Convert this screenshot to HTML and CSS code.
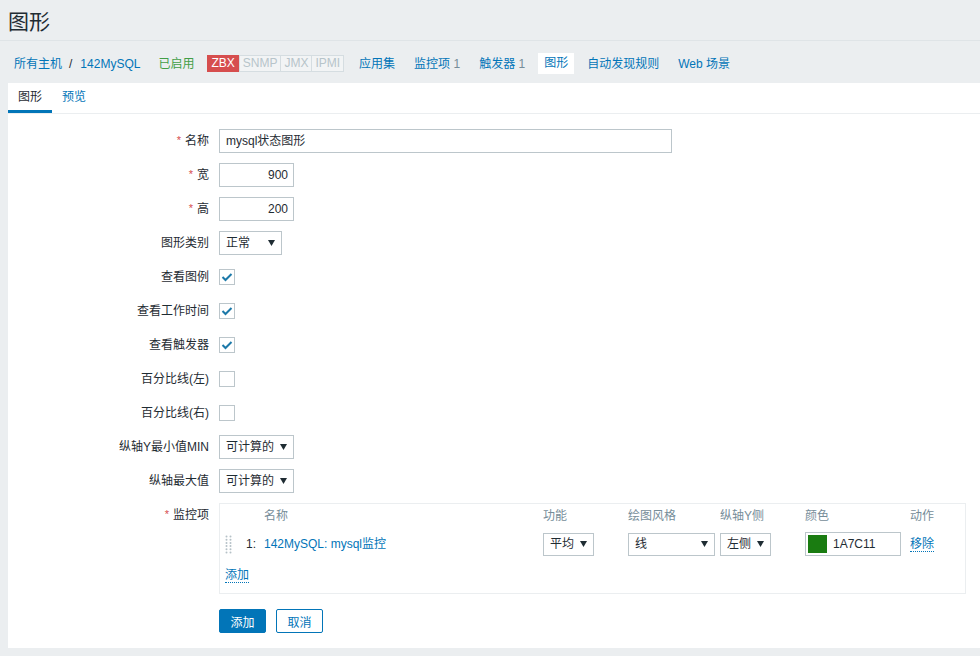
FILE: index.html
```html
<!DOCTYPE html>
<html lang="zh-CN">
<head>
<meta charset="utf-8">
<title>图形</title>
<link rel="stylesheet" href="styles.css">
</head>
<body>
<header class="page-header"><h1>图形</h1></header>
<nav class="host-nav">
  <a class="crumb">所有主机</a><span class="sep">/</span><a class="crumb host">142MySQL</a>
  <span class="status-green">已启用</span>
  <span class="tags"><span class="tag tag-red">ZBX</span><span class="tag">SNMP</span><span class="tag">JMX</span><span class="tag">IPMI</span></span>
  <a class="nav-item">应用集</a>
  <a class="nav-item">监控项 <span class="cnt">1</span></a>
  <a class="nav-item">触发器 <span class="cnt">1</span></a>
  <a class="nav-item selected">图形</a>
  <a class="nav-item">自动发现规则</a>
  <a class="nav-item">Web 场景</a>
</nav>
<main class="panel">
  <div class="tabs"><span class="tab active">图形</span><span class="tab">预览</span></div>
  <form class="form">
    <div class="row"><label class="lbl"><span class="req">*</span>名称</label><div class="field"><span class="input input-name">mysql状态图形</span></div></div>
    <div class="row"><label class="lbl"><span class="req">*</span>宽</label><div class="field"><span class="input input-num">900</span></div></div>
    <div class="row"><label class="lbl"><span class="req">*</span>高</label><div class="field"><span class="input input-num">200</span></div></div>
    <div class="row"><label class="lbl">图形类别</label><div class="field"><span class="select sel-type"><span>正常</span><svg class="arr" width="7" height="6" viewBox="0 0 7 6"><path d="M0 0H7L3.5 6Z"/></svg></span></div></div>
    <div class="row"><label class="lbl">查看图例</label><div class="field"><span class="cb"><svg width="12" height="10" viewBox="0 0 12 10"><path d="M1.5 5L4.5 8L10.5 2" fill="none" stroke="#1c79a9" stroke-width="2"/></svg></span></div></div>
    <div class="row"><label class="lbl">查看工作时间</label><div class="field"><span class="cb"><svg width="12" height="10" viewBox="0 0 12 10"><path d="M1.5 5L4.5 8L10.5 2" fill="none" stroke="#1c79a9" stroke-width="2"/></svg></span></div></div>
    <div class="row"><label class="lbl">查看触发器</label><div class="field"><span class="cb"><svg width="12" height="10" viewBox="0 0 12 10"><path d="M1.5 5L4.5 8L10.5 2" fill="none" stroke="#1c79a9" stroke-width="2"/></svg></span></div></div>
    <div class="row"><label class="lbl">百分比线(左)</label><div class="field"><span class="cb"></span></div></div>
    <div class="row"><label class="lbl">百分比线(右)</label><div class="field"><span class="cb"></span></div></div>
    <div class="row"><label class="lbl">纵轴Y最小值MIN</label><div class="field"><span class="select sel-calc"><span>可计算的</span><svg class="arr" width="7" height="6" viewBox="0 0 7 6"><path d="M0 0H7L3.5 6Z"/></svg></span></div></div>
    <div class="row"><label class="lbl">纵轴最大值</label><div class="field"><span class="select sel-calc"><span>可计算的</span><svg class="arr" width="7" height="6" viewBox="0 0 7 6"><path d="M0 0H7L3.5 6Z"/></svg></span></div></div>
    <div class="row top"><label class="lbl"><span class="req">*</span>监控项</label>
      <div class="field">
        <div class="items">
          <div class="items-grid">
            <span></span><span></span><span class="th">名称</span><span class="th">功能</span><span class="th">绘图风格</span><span class="th">纵轴Y侧</span><span class="th">颜色</span><span class="th">动作</span>
            <span class="handle"><svg width="7" height="19" viewBox="0 0 7 19" fill="#b5c1c7"><circle cx="1.5" cy="1.5" r="1"/><circle cx="5.5" cy="1.5" r="1"/><circle cx="1.5" cy="4.7" r="1"/><circle cx="5.5" cy="4.7" r="1"/><circle cx="1.5" cy="7.9" r="1"/><circle cx="5.5" cy="7.9" r="1"/><circle cx="1.5" cy="11.1" r="1"/><circle cx="5.5" cy="11.1" r="1"/><circle cx="1.5" cy="14.3" r="1"/><circle cx="5.5" cy="14.3" r="1"/><circle cx="1.5" cy="17.5" r="1"/><circle cx="5.5" cy="17.5" r="1"/></svg></span>
            <span class="idx">1:</span>
            <span class="td"><a class="link">142MySQL: mysql监控</a></span>
            <span class="td"><span class="select sm sel-func"><span>平均</span><svg class="arr" width="7" height="6" viewBox="0 0 7 6"><path d="M0 0H7L3.5 6Z"/></svg></span></span>
            <span class="td"><span class="select sm sel-style"><span>线</span><svg class="arr" width="7" height="6" viewBox="0 0 7 6"><path d="M0 0H7L3.5 6Z"/></svg></span></span>
            <span class="td"><span class="select sm sel-func"><span>左侧</span><svg class="arr" width="7" height="6" viewBox="0 0 7 6"><path d="M0 0H7L3.5 6Z"/></svg></span></span>
            <span class="td"><span class="color-input"><span class="swatch"></span><span>1A7C11</span></span></span>
            <span class="td"><a class="dlink">移除</a></span>
          </div>
          <div class="add-row"><a class="dlink">添加</a></div>
        </div>
      </div>
    </div>
    <div class="row buttons"><span class="lbl"></span><div class="field btns"><button type="button" class="btn btn-primary">添加</button><button type="button" class="btn btn-alt">取消</button></div></div>
  </form>
</main>
</body>
</html>
```

FILE: styles.css
```css
html, body {
  margin: 0;
  padding: 0;
}
body {
  background: #ebeef0;
  color: #1f2c33;
  font-family: "Liberation Sans", "Noto Sans CJK SC", sans-serif;
  font-size: 12px;
  line-height: 14px;
  overflow: hidden;
  width: 980px;
  height: 656px;
}
a { color: #0275b8; text-decoration: none; cursor: pointer; }

.page-header {
  height: 41px;
  border-bottom: 1px solid #dfe4e7;
  box-sizing: border-box;
  padding: 10px 8px 0;
}
.page-header h1 {
  margin: 0;
  font-size: 21px;
  line-height: 24px;
  font-weight: normal;
  color: #1f2c33;
}

.host-nav {
  height: 42px;
  display: flex;
  align-items: center;
  padding-left: 14px;
  padding-top: 3px;
  box-sizing: border-box;
}
.crumb { color: #0275b8; }
.sep { margin: 0 8px 0 7px; color: #1f2c33; }
.status-green { color: #429e47; margin-left: 18px; }
.tags { display: flex; margin-left: 13px; margin-right: 3px; }
.tag {
  border: 1px solid #d5dde1;
  color: #b7c4ca;
  padding: 0 3px;
  line-height: 15px;
  margin-right: -1px;
  background: #f2f4f5;
}
.tag-red {
  background: #d64e4e;
  border-color: #d64e4e;
  color: #fff;
  margin-right: 0;
}
.nav-item {
  padding: 4px 6px;
  margin-left: 7px;
  line-height: 14px;
  color: #0275b8;
}
.nav-item .cnt { color: #768d99; }
.nav-item.selected {
  background: #fff;
  color: #0275b8;
  padding: 4px 6px;
  line-height: 13px;
}

.panel {
  background: #fff;
  margin-left: 8px;
  padding-bottom: 15px;
}
.tabs {
  display: flex;
  border-bottom: 1px solid #ebeef0;
}
.tab {
  padding: 6px 10px 5px;
  line-height: 16px;
  color: #0275b8;
  border-bottom: 3px solid transparent;
}
.tab.active {
  color: #1f2c33;
  border-bottom-color: #0275b8;
}

.form {
  padding-top: 15px;
}
.row {
  display: flex;
  align-items: center;
  min-height: 24px;
  margin-bottom: 10px;
}
.row.top { align-items: flex-start; }
.lbl {
  width: 201px;
  flex: none;
  text-align: right;
  line-height: 24px;
  color: #1f2c33;
}
.req {
  color: #d64e4e;
  font-size: 11px;
  margin-right: 4px;
  vertical-align: top;
  position: relative;
  top: -1px;
}
.field {
  margin-left: 10px;
  display: flex;
  align-items: center;
}
.input, .select, .color-input {
  box-sizing: border-box;
  height: 24px;
  border: 1px solid #bcc6cb;
  background: #fff;
  display: inline-flex;
  align-items: center;
  color: #1f2c33;
}
.input { padding: 0 5px 0 6px; }
.input-name { width: 453px; }
.input-num { width: 75px; justify-content: flex-end; }
.select { justify-content: space-between; padding: 0 6px 0 6px; }
.select .arr { fill: #1f2c33; }
.sel-type { width: 63px; }
.sel-calc { width: 75px; }
.select.sm { height: 23px; }
.sel-func { width: 51px; }
.sel-style { width: 87px; }

.cb {
  width: 16px;
  height: 16px;
  box-sizing: border-box;
  border: 1px solid #bcc6cb;
  display: inline-flex;
  align-items: center;
  justify-content: center;
  background: #fff;
}

.items {
  width: 747px;
  box-sizing: border-box;
  border: 1px solid #ebeef0;
  padding: 0 5px 6px;
}
.items-grid {
  display: grid;
  grid-template-columns: 20px 19px 279px 85px 92px 85px 105px auto;
  grid-template-rows: 24px 24px;
  row-gap: 4px;
  align-items: center;
}
.th { color: #768d99; }
.handle { display: flex; align-items: center; }
.idx { color: #1f2c33; padding-left: 1px; }
.td { display: flex; align-items: center; }
.link { color: #0275b8; }
.dlink {
  color: #0275b8;
  border-bottom: 1px dotted #0275b8;
  line-height: 14px;
}
.color-input {
  width: 96px;
  height: 24px;
  padding: 0 4px 0 2px;
}
.swatch {
  width: 19px;
  height: 18px;
  background: #1a7c11;
  margin-right: 6px;
}
.add-row {
  margin-top: 7px;
  height: 24px;
  display: flex;
  align-items: center;
}

.buttons { margin-top: 15px; margin-bottom: 0; }
.btns { gap: 10px; }
.btn {
  height: 24px;
  width: 47px;
  box-sizing: border-box;
  font-family: inherit;
  font-size: 12px;
  border-radius: 2px;
  padding: 0;
  cursor: pointer;
}
.btn-primary {
  background: #0275b8;
  border: 1px solid #0275b8;
  color: #fff;
}
.btn-alt {
  background: #fff;
  border: 1px solid #0275b8;
  color: #0275b8;
}
```
